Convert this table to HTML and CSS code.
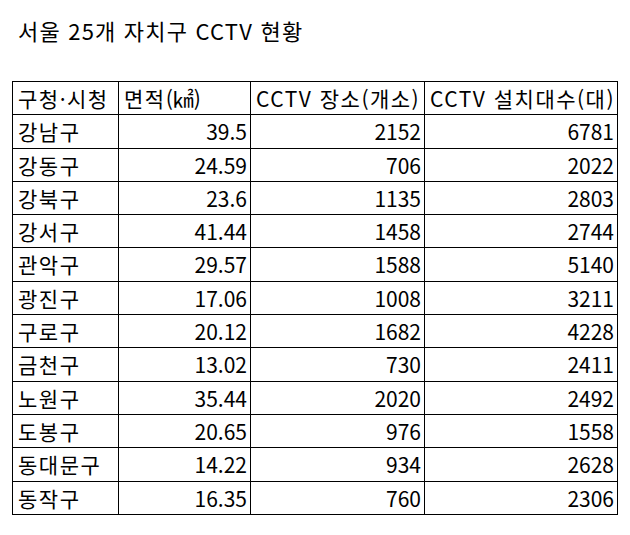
FILE: index.html
```html
<!DOCTYPE html>
<html lang="ko">
<head>
<meta charset="utf-8">
<link rel="stylesheet" href="styles.css">
</head>
<body>
<h1 class="title">서울 25개 자치구 CCTV 현황</h1>
<div class="sheet">
  <div class="cell head">구청·시청</div>
  <div class="cell head">면적<span class="unit">(㎢)</span></div>
  <div class="cell head">CCTV 장소(개소)</div>
  <div class="cell head">CCTV 설치대수(대)</div>

  <div class="cell">강남구</div><div class="cell num">39.5</div><div class="cell num">2152</div><div class="cell num">6781</div>
  <div class="cell">강동구</div><div class="cell num">24.59</div><div class="cell num">706</div><div class="cell num">2022</div>
  <div class="cell">강북구</div><div class="cell num">23.6</div><div class="cell num">1135</div><div class="cell num">2803</div>
  <div class="cell">강서구</div><div class="cell num">41.44</div><div class="cell num">1458</div><div class="cell num">2744</div>
  <div class="cell">관악구</div><div class="cell num">29.57</div><div class="cell num">1588</div><div class="cell num">5140</div>
  <div class="cell">광진구</div><div class="cell num">17.06</div><div class="cell num">1008</div><div class="cell num">3211</div>
  <div class="cell">구로구</div><div class="cell num">20.12</div><div class="cell num">1682</div><div class="cell num">4228</div>
  <div class="cell">금천구</div><div class="cell num">13.02</div><div class="cell num">730</div><div class="cell num">2411</div>
  <div class="cell">노원구</div><div class="cell num">35.44</div><div class="cell num">2020</div><div class="cell num">2492</div>
  <div class="cell">도봉구</div><div class="cell num">20.65</div><div class="cell num">976</div><div class="cell num">1558</div>
  <div class="cell">동대문구</div><div class="cell num">14.22</div><div class="cell num">934</div><div class="cell num">2628</div>
  <div class="cell">동작구</div><div class="cell num">16.35</div><div class="cell num">760</div><div class="cell num">2306</div>
</div>
</body>
</html>
```

FILE: styles.css
```css
html, body {
  margin: 0;
  padding: 0;
  background: #ffffff;
}

body {
  font-family: "Noto Sans CJK KR", "Noto Sans", sans-serif;
  color: #000000;
  padding: 15px 0 0 12px;
}

.title {
  margin: 0 0 0 6px;
  font-size: 22px;
  font-weight: normal;
  letter-spacing: 1.2px;
  line-height: 30px;
  height: 66px;
}

.sheet {
  display: grid;
  grid-template-columns: 106px 132px 174px 193px;
  grid-auto-rows: 33.3px;
  width: max-content;
  border-left: 1px solid #000;
  border-top: 1px solid #000;
}

.cell {
  box-sizing: border-box;
  border-right: 1px solid #000;
  border-bottom: 1px solid #000;
  font-size: 21px;
  line-height: 32px;
  letter-spacing: 1.5px;
  padding: 0 4px 0 5px;
  white-space: nowrap;
  overflow: hidden;
}

.num {
  text-align: right;
  letter-spacing: 0;
  padding-right: 3px;
}

.unit {
  letter-spacing: 0;
}
```
